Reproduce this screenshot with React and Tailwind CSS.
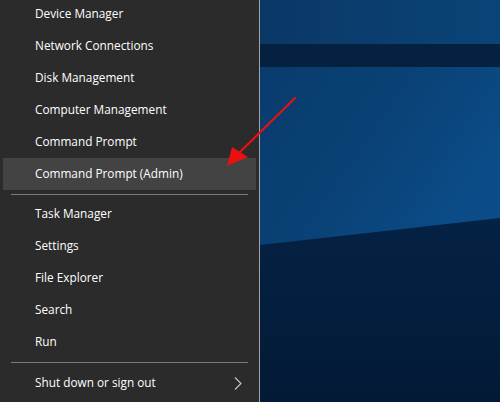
import React from "react";

const GROUP_A = [
  "Device Manager",
  "Network Connections",
  "Disk Management",
  "Computer Management",
  "Command Prompt",
  "Command Prompt (Admin)",
];

const GROUP_B = ["Task Manager", "Settings", "File Explorer", "Search", "Run"];

const Row = ({ label, active, children }) => (
  <div
    className={`h-8 mx-[3px] pl-8 pr-2 flex items-center justify-between ${
      active ? "bg-[#434343]" : ""
    }`}>
    <span>{label}</span>
    {children}
  </div>
);

const Divider = ({ h = "h-2" }) => (
  <div className={`${h} flex items-center px-[11px]`}>
    <div className="h-px w-full bg-[#7c7c7c]" />
  </div>
);

const Wallpaper = () => (
  <svg className="w-full h-full block" viewBox="0 0 240 402" preserveAspectRatio="none">
    <defs>
      <linearGradient id="top" x1="0" y1="0" x2="1" y2="0">
        <stop offset="0" stopColor="#0a3866" />
        <stop offset="1" stopColor="#0b4478" />
      </linearGradient>
      <linearGradient id="mid" x1="0" y1="0" x2="1" y2="0.5">
        <stop offset="0" stopColor="#093b6d" />
        <stop offset="0.6" stopColor="#0a4378" />
        <stop offset="1" stopColor="#0b4c88" />
      </linearGradient>
      <linearGradient id="low" x1="0" y1="0" x2="0" y2="1">
        <stop offset="0" stopColor="#05294f" />
        <stop offset="0.55" stopColor="#042244" />
        <stop offset="1" stopColor="#031a36" />
      </linearGradient>
    </defs>
    <rect x="0" y="0" width="240" height="402" fill="url(#low)" />
    <rect x="0" y="0" width="240" height="44" fill="url(#top)" />
    <rect x="0" y="44" width="240" height="23" fill="#04223f" />
    <polygon points="0,67 240,67 240,218 0,245" fill="url(#mid)" />
  </svg>
);

export default function App() {
  return (
    <div className="relative w-[500px] h-[402px] flex overflow-hidden bg-[#2b2b2b]">
      <div
        className="w-[259px] h-full bg-[#2b2b2b] text-white text-[11.8px] flex flex-col"
        style={{ fontFamily: '"Open Sans", "Noto Sans", sans-serif' }}>
        <div className="-mt-[2px]">
          {GROUP_A.map((l, i) => (
            <Row key={l} label={l} active={i === GROUP_A.length - 1} />
          ))}
        </div>
        <Divider />
        {GROUP_B.map((l) => (
          <Row key={l} label={l} />
        ))}
        <Divider h="h-[9px]" />
        <Row label="Shut down or sign out">
          <svg width="8" height="13" viewBox="0 0 8 13" className="mr-[6px]">
            <path d="M1 0.5 L7 6.5 L1 12.5" fill="none" stroke="#c8c8c8" strokeWidth="1.1" />
          </svg>
        </Row>
      </div>
      <div className="w-px h-full bg-[#a3a3a3]" />
      <div className="flex-1 h-full">
        <Wallpaper />
      </div>

      {/* red annotation arrow */}
      <svg className="absolute left-0 top-0 pointer-events-none" width="500" height="402">
        <line x1="295" y1="98" x2="238" y2="154" stroke="#e81010" strokeWidth="2.2" strokeLinecap="round" />
        <polygon points="227,166 232,147 248,157" fill="#e81010" />
      </svg>
    </div>
  );
}
